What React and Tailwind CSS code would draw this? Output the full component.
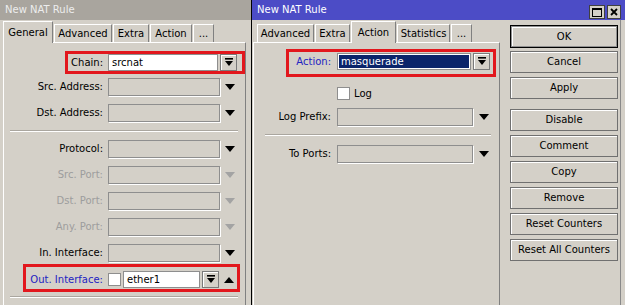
import React from "react";

const LABEL_TONES = {
  normal: "text-black",
  dim: "text-[#9d9d9d]",
  blue: "text-[#2323c2]",
};

function Tri({ up = false, dim = false }) {
  return (
    <svg width="10" height="6" viewBox="0 0 10 6" className="shrink-0">
      <path d={up ? "M0 6 L10 6 L5 0 Z" : "M0 0 L10 0 L5 6 Z"} fill={dim ? "#a3a3a3" : "#000"} />
    </svg>
  );
}

function DropBtn() {
  return (
    <div className="flex h-[17px] w-[17px] shrink-0 items-center justify-center border border-[#7a7a7a] bg-[#d4d0c8] shadow-[inset_1px_1px_0_#fff]">
      <svg width="8" height="9" viewBox="0 0 8 9">
        <rect x="0" y="0" width="8" height="1.6" fill="#000" />
        <path d="M0 3 L8 3 L4 8 Z" fill="#000" />
      </svg>
    </div>
  );
}

function RedBox({ className }) {
  return <div className={`pointer-events-none absolute border-[3px] border-[#e2171d] ${className}`} />;
}

function Tab({ label, w, active }) {
  if (active) {
    return (
      <div
        className={`${w} relative z-10 -mb-px flex h-[22px] items-center justify-center border-l border-r border-t border-l-white border-r-[#808080] border-t-white bg-[#d4d0c8]`}
      >
        {label}
      </div>
    );
  }
  return (
    <div
      className={`${w} flex h-[18px] items-center justify-center border-l border-r border-t border-l-white border-r-[#808080] border-t-white`}
    >
      {label}
    </div>
  );
}

function Row({ label, tone = "normal", lw, className, children }) {
  return (
    <div className={`relative flex items-center ${className}`}>
      <div className={`${lw} shrink-0 text-right ${LABEL_TONES[tone]}`}>{label}</div>
      {children}
    </div>
  );
}

function Field({ className, children }) {
  return (
    <div className={`flex shrink-0 items-center border border-[#8e8e8e] shadow-[1px_1px_0_#fff] ${className}`}>
      {children}
    </div>
  );
}

function Sep({ className }) {
  return <div className={`h-[2px] border-b border-t border-b-white border-t-[#aaa69f] ${className}`} />;
}

function Btn({ label, className }) {
  return (
    <div
      className={`flex items-center justify-center border border-[#707070] shadow-[inset_1px_1px_0_#fff] ${className}`}
    >
      {label}
    </div>
  );
}

function GeneralTab() {
  const lw = "w-[99px]";
  return (
    <div className="flex flex-col">
      <Row label="Chain:" lw={lw} className="mt-[11px] h-[17px]">
        <div className="ml-[5px] flex h-[17px] w-[110px] items-center border border-[#8e8e8e] bg-white pl-[3px]">
          srcnat
        </div>
        <div className="ml-[2px]">
          <DropBtn />
        </div>
        <RedBox className="-top-[3px] left-[61px] h-[23px] w-[180px]" />
      </Row>
      <Row label="Src. Address:" lw={lw} className="mt-[7px] h-[18px]">
        <Field className="ml-[5px] h-[18px] w-[112px]" />
        <div className="ml-[5px]"><Tri /></div>
      </Row>
      <Row label="Dst. Address:" lw={lw} className="mt-[8px] h-[18px]">
        <Field className="ml-[5px] h-[18px] w-[112px]" />
        <div className="ml-[5px]"><Tri /></div>
      </Row>
      <Sep className="ml-[6px] mt-[8px] w-[228px]" />
      <Row label="Protocol:" lw={lw} className="mt-[8px] h-[18px]">
        <Field className="ml-[5px] h-[18px] w-[112px]" />
        <div className="ml-[5px]"><Tri /></div>
      </Row>
      {["Src. Port:", "Dst. Port:", "Any. Port:"].map((l) => (
        <Row key={l} label={l} tone="dim" lw={lw} className="mt-[8px] h-[18px]">
          <Field className="ml-[5px] h-[18px] w-[112px]" />
          <div className="ml-[5px]"><Tri dim /></div>
        </Row>
      ))}
      <Row label="In. Interface:" lw={lw} className="mt-[8px] h-[18px]">
        <Field className="ml-[5px] h-[18px] w-[112px]" />
        <div className="ml-[5px]"><Tri /></div>
      </Row>
      <Row label="Out. Interface:" tone="blue" lw={lw} className="mt-[9px] h-[17px]">
        <div className="ml-[5px] h-[13px] w-[13px] shrink-0 border border-[#8e8e8e] bg-white" />
        <div className="ml-[2px] flex h-[17px] w-[77px] items-center border border-[#8e8e8e] bg-white pl-[3px]">
          ether1
        </div>
        <div className="ml-[2px]">
          <DropBtn />
        </div>
        <div className="ml-[5px]"><Tri up /></div>
        <RedBox className="-top-[7px] left-[19px] h-[28px] w-[217px]" />
      </Row>
      <Sep className="ml-[6px] mt-[8px] w-[228px]" />
    </div>
  );
}

function ActionTab() {
  const lw = "w-[77px]";
  return (
    <div className="flex flex-col">
      <Row label="Action:" tone="blue" lw={lw} className="mt-[10px] h-[17px]">
        <div className="ml-[6px] flex h-[17px] w-[134px] items-center border border-[#8e8e8e] bg-[#0a246a] pl-[3px] text-white shadow-[inset_0_0_0_1px_#fff]">
          masquerade
        </div>
        <div className="ml-[2px]">
          <DropBtn />
        </div>
        <RedBox className="-top-[4px] left-[32px] h-[28px] w-[210px]" />
      </Row>
      <div className="mt-[17px] flex h-[13px] items-center">
        <div className="w-[77px] shrink-0" />
        <div className="ml-[6px] h-[13px] w-[13px] border border-[#8e8e8e] bg-white" />
        <span className="ml-[4px]">Log</span>
      </div>
      <Row label="Log Prefix:" lw={lw} className="mt-[8px] h-[18px]">
        <Field className="ml-[6px] h-[18px] w-[136px]" />
        <div className="ml-[6px]"><Tri /></div>
      </Row>
      <Sep className="ml-[11px] mt-[8px] w-[226px]" />
      <Row label="To Ports:" lw={lw} className="mt-[9px] h-[18px]">
        <Field className="ml-[6px] h-[18px] w-[136px]" />
        <div className="ml-[6px]"><Tri /></div>
      </Row>
    </div>
  );
}

export default function App() {
  const buttons = ["Comment", "Copy", "Remove", "Reset Counters", "Reset All Counters"];

  return (
    <div className="flex h-[305px] w-[625px] overflow-hidden bg-[#d4d0c8] font-['DejaVu_Sans',sans-serif] text-[10px] leading-none text-black">
      {/* left window */}
      <div className="flex w-[251px] shrink-0 flex-col">
        <div className="flex h-[20px] shrink-0 items-center bg-[#a9a59e] pl-[5px] text-[10px] text-[#ededed]">
          New NAT Rule
        </div>
        <div className="flex h-[22px] shrink-0 items-end gap-px pl-[3px]">
          <Tab label="General" w="w-[50px]" active />
          <Tab label="Advanced" w="w-[58px]" />
          <Tab label="Extra" w="w-[36px]" />
          <Tab label="Action" w="w-[42px]" />
          <Tab label="..." w="w-[21px]" />
        </div>
        <div className="ml-[3px] w-[243px] flex-1 border-l border-r border-t border-l-white border-r-[#808080] border-t-white">
          <GeneralTab />
        </div>
      </div>

      {/* right window */}
      <div className="flex flex-1 flex-col border-l border-black">
        <div className="flex h-[20px] shrink-0 items-center justify-between bg-[#4c4cc6] pl-[5px] pr-[4px] text-[10px] text-white">
          <span>New NAT Rule</span>
          <div className="mt-[4px] flex gap-[2px]">
            <div className="flex h-[14px] w-[16px] items-center justify-center border border-[#404040] bg-[#d4d0c8]">
              <svg width="10" height="9" viewBox="0 0 10 9">
                <rect x="0.5" y="0.5" width="9" height="8" fill="none" stroke="#000" />
                <rect x="0" y="0" width="10" height="2" fill="#000" />
              </svg>
            </div>
            <div className="flex h-[14px] w-[14px] items-center justify-center border border-[#404040] bg-[#d4d0c8]">
              <svg width="8" height="8" viewBox="0 0 8 8">
                <path d="M1 1 L7 7 M7 1 L1 7" stroke="#000" strokeWidth="1.8" />
              </svg>
            </div>
          </div>
        </div>
        <div className="flex flex-1">
          <div className="flex w-[248px] shrink-0 flex-col pl-px">
            <div className="flex h-[22px] shrink-0 items-end gap-px pl-[4px]">
              <Tab label="Advanced" w="w-[57px]" />
              <Tab label="Extra" w="w-[35px]" />
              <Tab label="Action" w="w-[45px]" active />
              <Tab label="Statistics" w="w-[53px]" />
              <Tab label="..." w="w-[21px]" />
            </div>
            <div className="flex-1 border-l border-r border-t border-l-white border-r-[#808080] border-t-white">
              <ActionTab />
            </div>
          </div>
          <div className="ml-[10px] flex w-[108px] shrink-0 flex-col pt-[5px]">
            <div className="h-[23px] border border-black">
              <Btn label="OK" className="h-full border-[#909090]" />
            </div>
            <Btn label="Cancel" className="mt-[3px] h-[22px]" />
            <Btn label="Apply" className="mt-[4px] h-[22px]" />
            <Btn label="Disable" className="mt-[10px] h-[22px]" />
            {buttons.map((b) => (
              <Btn key={b} label={b} className="mt-[4px] h-[22px]" />
            ))}
          </div>
          <div className="ml-[2px] w-px bg-[#8a8a8a]" />
        </div>
      </div>
    </div>
  );
}
